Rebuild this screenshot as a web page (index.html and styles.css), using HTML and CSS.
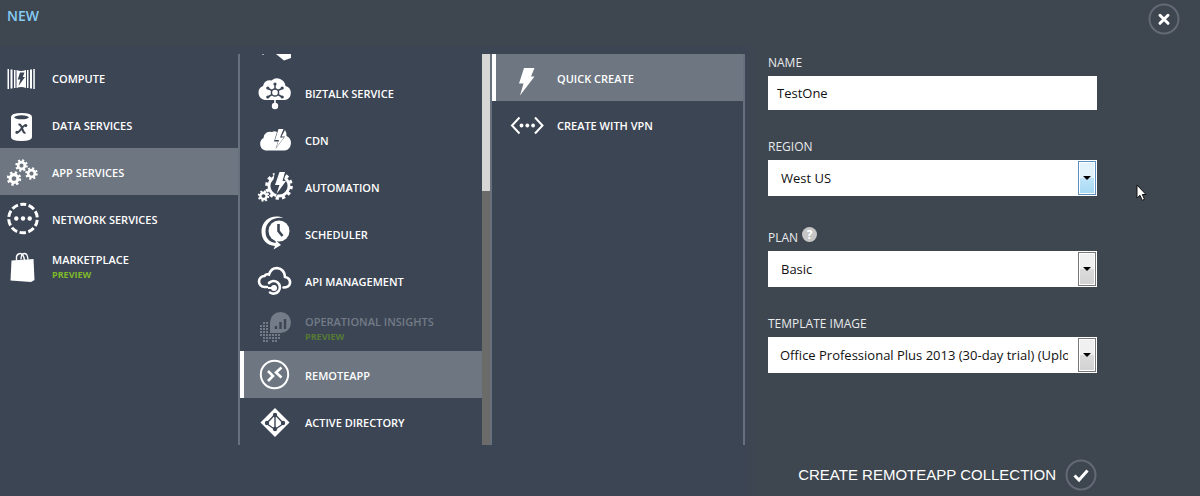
FILE: index.html
```html
<!DOCTYPE html>
<html lang="en">
<head>
<meta charset="utf-8">
<title>New RemoteApp collection</title>
<link rel="stylesheet" href="styles.css">
</head>
<body>
<svg class="defs" aria-hidden="true">
  <symbol id="gear" viewBox="-10 -10 20 20">
    <circle r="5.2" fill="none" stroke="currentColor" stroke-width="4.2"/>
    <circle r="8" fill="none" stroke="currentColor" stroke-width="3.4" stroke-dasharray="3.1 3.183" />
  </symbol>
</svg>
<div class="drawer">
  <header class="top">
    <h1 class="title">NEW</h1>
    <button class="round" type="button" aria-label="Close">
      <svg width="32" height="32" viewBox="0 0 32 32"><circle class="ring" cx="16" cy="16" r="14.5"/><path d="M12 12.3l8 8M20 12.3l-8 8" stroke="#fff" stroke-width="3" stroke-linecap="round"/></svg>
    </button>
  </header>
  <main class="body">
    <nav class="col first" aria-label="Categories">
      <button class="item" type="button">
        <svg class="icon" viewBox="0 0 36 47"><path fill="currentColor" d="M3.5 14h1.5v20H3.500zM6.500 14.500h2v19h-2zM10 15h1.500v18H10zM12.500 15q4.500 1.800 9.500 0v18q-5-1.800-9.500 0zM23 15h1.500v18H23zM26 14.500h2v19h-2zM29.300 14h1.500v20h-1.500z"/><path class="cut" d="M16 17.500h4.500l-1.700 4.500h2.200l-6.500 9 1.800-6.500H13.700z"/></svg>
        <span class="text">COMPUTE</span></button>
      <button class="item" type="button">
        <svg class="icon" viewBox="0 0 36 47"><path fill="currentColor" d="M7 15q0-4 10.500-4T28 15v20q0 4-10.500 4T7 35z"/><ellipse class="cut" cx="17.500" cy="15.300" rx="7.300" ry="2"/><path d="M14.500 22.700c4-1.500 3.500 9.300 7 8M12.500 30.500c3 1.500 6.500-8.500 9.500-7.300" fill="none" stroke="#3c4554" stroke-width="2"/><circle class="cut" cx="12.900" cy="30.300" r="1.500"/><circle class="cut" cx="21.800" cy="23.600" r="1.500"/></svg>
        <span class="text">DATA SERVICES</span></button>
      <button class="item on" type="button">
        <svg class="icon" viewBox="0 0 36 47"><use href="#gear" x="11" y="10" width="13" height="13"/><use href="#gear" x="21" y="18" width="13" height="13"/><use href="#gear" x="2.500" y="22" width="15" height="15"/></svg>
        <span class="text">APP SERVICES</span></button>
      <button class="item" type="button">
        <svg class="icon" viewBox="0 0 36 47"><circle cx="19" cy="22.500" r="14.300" fill="none" stroke="currentColor" stroke-width="3" stroke-dasharray="6.500 2.485" stroke-dashoffset="3.250" transform="rotate(-90 19 22.500)"/><circle cx="12.300" cy="22.500" r="2.200" fill="currentColor"/><circle cx="19" cy="22.500" r="2.200" fill="currentColor"/><circle cx="25.700" cy="22.500" r="2.200" fill="currentColor"/></svg>
        <span class="text">NETWORK SERVICES</span></button>
      <button class="item" type="button">
        <svg class="icon" viewBox="0 0 36 47"><path fill="currentColor" d="M7.500 17.500l22-1.500 1 21-3.500 2-20.500-1.500z"/><path d="M12.500 17.500v-4q1-3 4-3 3 0 4 7M17 16.500q0-6 3.500-6 3 0 3.500 6" fill="none" stroke="currentColor" stroke-width="1.400"/></svg>
        <span class="text">MARKETPLACE<small class="tag">PREVIEW</small></span></button>
    </nav>

    <nav class="col scroll" aria-label="App services">
      <div class="list">
        <div class="clipped"><svg width="36" height="15" viewBox="0 0 36 15"><path fill="currentColor" d="M19 0h15v4l-7 2.500zM5 0h2l-1 1z"/></svg></div>
        <button class="item" type="button">
          <svg class="icon" viewBox="0 0 36 47"><path fill="currentColor" d="M8 30a7.300 7.300 0 0 1-2-14 6.500 6.500 0 0 1 8.500-5.500A8.500 8.500 0 0 1 28.500 16 7.200 7.200 0 0 1 28 30z"/><path d="M18 26v10" stroke="currentColor" stroke-width="1.600"/><circle cx="18" cy="36" r="3.200" fill="currentColor"/><g fill="none" stroke="#3c4554" stroke-width="1.500"><circle cx="18" cy="22.500" r="3.600"/><path d="M18 14v5M11 18.500l4 2M25 18.500l-4 2M11 27l4-2.500M25 27l-4-2.500"/></g><g class="cut"><circle cx="18" cy="14" r="1.600"/><circle cx="10.800" cy="18" r="1.600"/><circle cx="25.200" cy="18" r="1.600"/><circle cx="10.800" cy="27" r="1.600"/><circle cx="25.200" cy="27" r="1.600"/></g></svg>
          <span class="text">BIZTALK SERVICE</span></button>
        <button class="item" type="button">
          <svg class="icon" viewBox="0 0 36 47"><path fill="currentColor" d="M8.500 33.500a6.800 6.800 0 0 1-2-12.500 6.500 6.500 0 0 1 8.500-6q2.500-1.500 5 0L17 24.500h4L18.500 32l9.500-12.500h-3.500L28 13q1.500 2 1.500 6 4.500 2 4.500 7-.5 6.500-6 7.500z"/><path fill="currentColor" d="M21.500 12h5l-3.500 8.500h4l-8 10.500 3-8h-4z"/></svg>
          <span class="text">CDN</span></button>
        <button class="item" type="button">
          <svg class="icon" viewBox="0 0 36 47"><circle cx="22" cy="22" r="10" fill="none" stroke="currentColor" stroke-width="2.800"/><circle cx="22" cy="22" r="12.300" fill="none" stroke="currentColor" stroke-width="3" stroke-dasharray="3.300 3.140"/><path class="cut" d="M18 7h11l-2 10h2.500L19 33l2-8.500h-6z"/><path fill="currentColor" d="M22.500 8h5.500l-2.500 9h3.500l-9.500 13 3-9h-4.500z"/><use href="#gear" x="0.500" y="26" width="12" height="12"/></svg>
          <span class="text">AUTOMATION</span></button>
        <button class="item" type="button">
          <svg class="icon" viewBox="0 0 36 47"><circle cx="22" cy="20" r="10.500" fill="currentColor"/><path d="M21.500 13v7l4 5" fill="none" stroke="#3c4554" stroke-width="2.600"/><path fill="currentColor" d="M26.500 7C16 2.500 4.500 8.500 4.500 20.500 4.500 29 10 34.500 18 35l-1.500 3.500 7.500-4.500-5.500-5 .2 3C12 31 8.500 27 8.500 20.500 8.500 11 16.500 5.500 26.500 7z"/></svg>
          <span class="text">SCHEDULER</span></button>
        <button class="item" type="button">
          <svg class="icon" viewBox="0 0 36 47"><path d="M10 29H7.500A5.500 5.500 0 0 1 7.500 18Q9 15.500 12 16.500 14 10 20 10 27.500 11 28 19 33.500 20 33 25.500 32 29.500 26.500 29.500" fill="none" stroke="currentColor" stroke-width="2.600" stroke-linecap="round"/><path d="M12 25a6.300 6.300 0 1 1 1 9.500" fill="none" stroke="currentColor" stroke-width="2.600" stroke-linecap="round"/><circle cx="17" cy="30" r="3" fill="currentColor"/><path d="M11 30h6" stroke="currentColor" stroke-width="2"/></svg>
          <span class="text">API MANAGEMENT</span></button>
        <button class="item dim" type="button">
          <svg class="icon" viewBox="0 0 36 47"><path fill="currentColor" d="M13 28V17.500A10.500 10.500 0 1 1 23.500 28z"/><path d="M19 21v3M23.500 17v7M28 14v10" stroke="#3c4554" stroke-width="2.400"/><path d="M6 18h6M3 21h9M3 24h9M3 27h9M3 30h21M6 33h18M6 36h6M15 36h6" fill="none" stroke="currentColor" stroke-width="2" stroke-dasharray="2 1"/></svg>
          <span class="text">OPERATIONAL INSIGHTS<small class="tag">PREVIEW</small></span></button>
        <button class="item on bar" type="button">
          <svg class="icon" viewBox="0 0 36 47"><circle cx="17.500" cy="22.500" r="13.700" fill="none" stroke="currentColor" stroke-width="2"/><path d="M11 19l5 5-5 5M24.500 15.500l-5.500 5 5.500 5" fill="none" stroke="currentColor" stroke-width="2.600"/></svg>
          <span class="text">REMOTEAPP</span></button>
        <button class="item" type="button">
          <svg class="icon" viewBox="0 0 36 47"><path fill="currentColor" d="M18 9L32.500 23.500 18 38 3.500 23.500z"/><path d="M18 15.500l-8.500 9 8.500 6 8.500-6zM18 15.500v15" fill="none" stroke="#3c4554" stroke-width="1.400"/><g class="cut"><circle cx="18" cy="16" r="2.200"/><circle cx="10" cy="24" r="2.200"/><circle cx="26" cy="24" r="2.200"/><circle cx="18" cy="30" r="2.200"/></g></svg>
          <span class="text">ACTIVE DIRECTORY</span></button>
      </div>
      <div class="track"><div class="thumb"></div></div>
    </nav>

    <nav class="col last" aria-label="RemoteApp">
      <button class="item on bar" type="button">
        <svg class="icon" viewBox="0 0 36 47"><path fill="currentColor" d="M15 13H25.500l-3.500 8.500h3.500L11 40.500l3.500-12h-4.500z"/></svg>
        <span class="text">QUICK CREATE</span></button>
      <button class="item" type="button">
        <svg class="icon" viewBox="0 0 36 47"><path d="M10.500 15.500L3 23.500l7.500 8M26 15.500l7.500 8-7.500 8" fill="none" stroke="currentColor" stroke-width="2"/><circle cx="12.500" cy="23.500" r="1.900" fill="currentColor"/><circle cx="18.300" cy="23.500" r="1.900" fill="currentColor"/><circle cx="24.100" cy="23.500" r="1.900" fill="currentColor"/></svg>
        <span class="text">CREATE WITH VPN</span></button>
    </nav>

    <form class="form" id="collection">
      <div class="field">
        <label class="label" for="name">NAME</label>
        <input class="box short" id="name" type="text" value="TestOne">
      </div>
      <div class="field">
        <label class="label" for="region">REGION</label>
        <div class="pick hot"><select class="box" id="region"><option>West US</option></select><span class="arrow"></span></div>
      </div>
      <div class="field">
        <div class="row"><label class="label" for="plan">PLAN</label><button class="help" type="button" aria-label="Help">?</button></div>
        <div class="pick"><select class="box" id="plan"><option>Basic</option></select><span class="arrow"></span></div>
      </div>
      <div class="field">
        <label class="label" for="template">TEMPLATE IMAGE</label>
        <div class="pick"><select class="box long" id="template"><option>Office Professional Plus 2013 (30-day trial) (Uploaded)</option></select><span class="arrow"></span></div>
      </div>
    </form>
  </main>
  <footer class="foot">
    <button class="create" type="submit" form="collection">CREATE REMOTEAPP COLLECTION
      <svg width="32" height="32" viewBox="0 0 32 32"><circle class="ring" cx="16" cy="16" r="14.500"/><path d="M9.500 16.500l4.500 4.500 8.500-9.500" fill="none" stroke="#fff" stroke-width="3"/></svg>
    </button>
  </footer>
  <svg class="pointer" width="12" height="18" viewBox="0 0 12 18"><path d="M1 1v13l3-2.700 2.200 5 2.300-1-2.200-4.800H10z" fill="#fff" stroke="#111" stroke-width="1"/></svg>
</div>
</body>
</html>
```
FILE: styles.css
```css
* { box-sizing: border-box; }

body {
  margin: 0;
  background: #3e4650;
  color: #fff;
  font-family: "Open Sans", "Noto Sans", sans-serif;
}

.defs { position: absolute; width: 0; height: 0; }

button {
  border: 0;
  padding: 0;
  background: none;
  color: inherit;
  font: inherit;
  cursor: pointer;
}

.drawer {
  position: relative;
  min-height: 100vh;
  display: flex;
  flex-direction: column;
  background: linear-gradient(#3e4650, #3e4650) top / 100% 46px no-repeat,
    linear-gradient(90deg, #3c4554 62%, #3e4650 63%);
}

.top {
  display: flex;
  justify-content: space-between;
  height: 54px;
  padding: 3px 20px 0 7px;
}

.title {
  margin: 4px 0 0;
  color: #86cdf5;
  font-size: 14px;
  line-height: 18px;
  font-weight: 600;
}

.round { height: 32px; }

.ring { fill: none; stroke: #636a76; stroke-width: 2; }

.body {
  display: grid;
  grid-template-columns: 238fr 252fr 255fr 455fr;
}

.col { border-left: 2px solid #66717d; }
.first { border-left: 0; }
.last { border-right: 2px solid #66717d; }
.scroll { display: flex; }
.list { flex: 1; }

.item {
  display: flex;
  align-items: center;
  gap: 12px;
  width: 100%;
  height: 47px;
  padding: 2px 0 0 4px;
  text-align: left;
}

.scroll .item, .clipped { padding-left: 17px; }
.last .item { padding-left: 17px; }
.clipped { height: 15px; display: flex; }
.clipped svg { flex: none; }

.on { background: #6d7681; }
.bar { box-shadow: inset 4px 0 #fff; }
.dim { color: #727b87; }
.dim .tag { color: #567a35; }

.icon { flex: none; width: 36px; height: 47px; }
.cut { fill: #3c4554; }

.text {
  font-size: 11px;
  line-height: 16px;
  font-weight: 600;
  white-space: nowrap;
}

.tag {
  display: block;
  color: #7fba2b;
  font-size: 9px;
  line-height: 14px;
  font-weight: 700;
}

.track { width: 8px; background: #6b6b69; }
.thumb { height: 35%; background: #d6d6d5; }

.form {
  display: flex;
  flex-direction: column;
  gap: 28px;
  padding: 0 103px 0 23px;
}

.field { display: flex; flex-direction: column; gap: 4px; }
.row { display: flex; gap: 4px; height: 23px; align-items: flex-end; }

.label {
  font-size: 12px;
  line-height: 18px;
  color: #e8eaec;
}

.box {
  display: block;
  width: 100%;
  height: 36px;
  margin: 0;
  padding: 0 20px 0 12px;
  border: 1px solid #fff;
  border-radius: 0;
  background: #fff;
  color: #111;
  font-family: inherit;
  font-size: 13px;
  appearance: none;
}

.short { height: 34px; padding: 0 8px; }
.long { padding: 0 28px 0 11px; }

.pick { position: relative; }

.arrow {
  position: absolute;
  top: 1px;
  right: 1px;
  bottom: 1px;
  width: 18px;
  border: 1px solid #777;
  box-shadow: inset 0 0 0 1px #fff;
  background: linear-gradient(#f0f0f0 50%, #dcdcdc 50%, #d2d2d2);
  pointer-events: none;
}

.hot .arrow {
  border-color: #5a8fc4;
  background: linear-gradient(#e3f3fc 50%, #bfe4f9 50%, #a6d9f4);
}

.arrow::after {
  content: "";
  position: absolute;
  top: calc(50% - 2px);
  left: 4px;
  border: 4px solid transparent;
  border-top-color: #000;
  border-bottom: 0;
}

.help {
  width: 15px;
  height: 15px;
  margin-bottom: 5px;
  border-radius: 50%;
  background: #c6c6c6;
  color: #fff;
  font-size: 12px;
  line-height: 15px;
  font-weight: 700;
}

.foot {
  display: flex;
  justify-content: flex-end;
  margin-top: auto;
  padding: 0 103px 5px 0;
}

.create {
  display: flex;
  align-items: center;
  gap: 9px;
  font-family: "Liberation Sans", Arial, sans-serif;
  font-size: 15px;
  line-height: 20px;
}

.pointer {
  position: absolute;
  left: 1136px;
  top: 184px;
}
```
